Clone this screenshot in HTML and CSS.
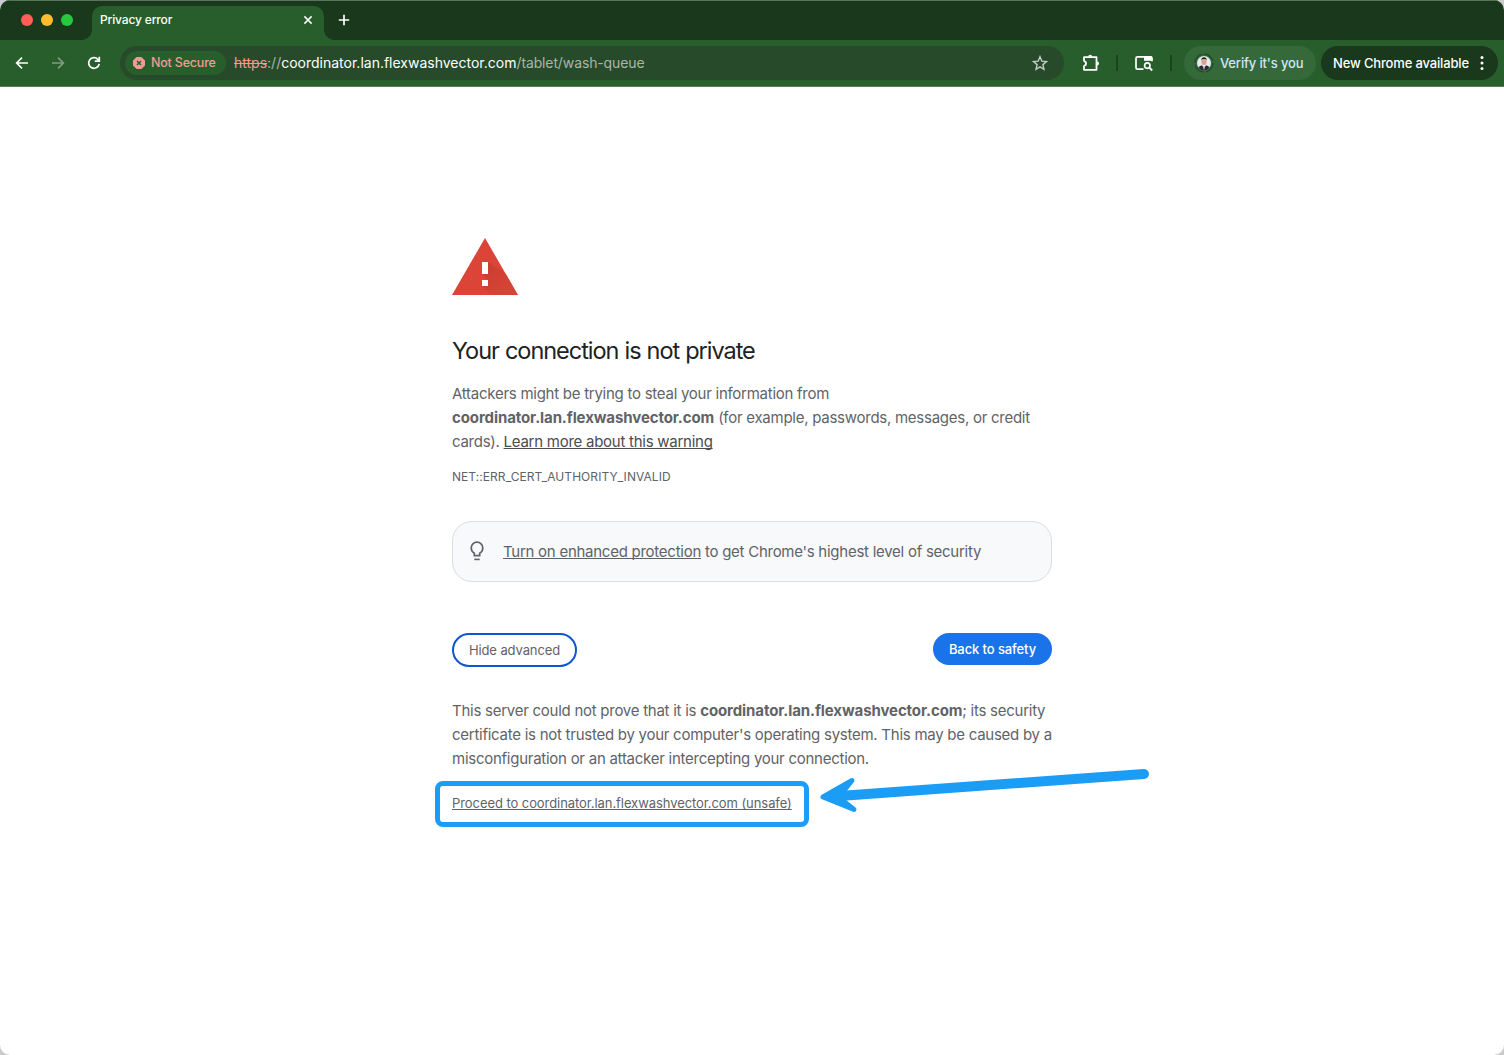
FILE: index.html
```html
<!DOCTYPE html>
<html lang="en">
<head>
    <meta charset="UTF-8">
    <meta name="viewport" content="width=device-width, initial-scale=1.0">
    <title>Privacy error</title>
    <link rel="stylesheet" href="styles.css">
</head>
<body>
    <div class="window">
        <header class="tab-strip">
            <div class="traffic-lights">
                <span class="light red"></span>
                <span class="light yellow"></span>
                <span class="light green"></span>
            </div>
            <div class="tab">
                <span class="tab-title">Privacy error</span>
                <svg class="tab-close" width="10" height="10" viewBox="0 0 10 10"><path d="M1.4 1.4l7.2 7.2M8.6 1.4L1.4 8.6" stroke="#fff" stroke-width="1.5"/></svg>
            </div>
            <svg class="new-tab" width="12" height="12" viewBox="0 0 12 12"><path d="M6 .8v10.4M.8 6h10.4" stroke="#fff" stroke-width="1.7"/></svg>
        </header>

        <nav class="toolbar">
            <div class="nav-buttons">
                <svg width="16" height="16" viewBox="0 0 16 16"><path d="M14 8H3M8 2.6L2.6 8 8 13.4" fill="none" stroke="#fff" stroke-width="1.6"/></svg>
                <svg class="disabled" width="16" height="16" viewBox="0 0 16 16"><path d="M2 8h11M8 2.6L13.4 8 8 13.4" fill="none" stroke="#fff" stroke-width="1.6"/></svg>
                <svg width="16" height="16" viewBox="0 0 16 16"><path d="M13.2 8.8A5.3 5.3 0 1 1 11.9 4.4L13 5.6" fill="none" stroke="#fff" stroke-width="1.7"/><path d="M13.3 1.8v4.4H8.8" fill="none" stroke="#fff" stroke-width="1.7"/></svg>
            </div>

            <div class="address-bar">
                <div class="not-secure">
                    <svg width="12" height="12" viewBox="0 0 12 12"><path d="M3.6 0h4.8L12 3.6v4.8L8.4 12H3.6L0 8.4V3.6z" fill="#f29b94"/><path d="M4 4l4 4M8 4L4 8" stroke="#285e2c" stroke-width="1.5"/></svg>
                    <span>Not Secure</span>
                </div>
                <div class="url"><span class="scheme">https</span><span class="dim">://</span><span class="host">coordinator.lan.flexwashvector.com</span><span class="path">/tablet/wash-queue</span></div>
                <svg class="star" width="16" height="16" viewBox="0 0 16 16"><path d="M8 1.7l1.8 4.4 4.7.4-3.6 3.1 1.1 4.7L8 11.8l-4 2.5 1.1-4.7L1.5 6.5l4.7-.4z" fill="none" stroke="#c3cdc4" stroke-width="1.4"/></svg>
            </div>

            <svg class="extensions" width="18" height="18" viewBox="0 0 18 18"><path d="M2 7.4V3.2h12.500v12.600H2v-4.200M2 7.400c2.700 0 2.700 4.200 0 4.200" fill="none" stroke="#fff" stroke-width="1.8" stroke-linejoin="round"/><path d="M6.200 2.800a2 2 0 0 1 4 0zM15 7.500a2 2 0 0 1 0 4z" fill="#fff"/></svg>
            <span class="divider"></span>
            <svg class="side-search" width="20" height="18" viewBox="0 0 20 18"><path d="M9.500 15.200H3.500a1.500 1.500 0 0 1-1.500-1.500V4.300a1.500 1.500 0 0 1 1.500-1.500h13a1.500 1.500 0 0 1 1.500 1.500v3" fill="none" stroke="#fff" stroke-width="1.700"/><path d="M10 2.500h8v4.300h-8z" fill="#fff"/><circle cx="13.300" cy="11.600" r="2.700" fill="none" stroke="#fff" stroke-width="1.700"/><path d="M15.300 13.600l2.900 2.900" stroke="#fff" stroke-width="1.800"/></svg>
            <span class="divider"></span>

            <div class="profile">
                <svg width="20" height="20" viewBox="0 0 20 20">
                    <circle cx="10" cy="10" r="9" fill="none" stroke="#1f5126" stroke-width="1.500" stroke-dasharray="12 2.100"/>
                    <circle cx="10" cy="10" r="7" fill="#e9eaf0"/>
                    <path d="M4.500 14.400c1-1.700 2.800-2.200 5.500-2.200s4.500.5 5.500 2.200A7 7 0 0 1 4.500 14.400z" fill="#25283c"/>
                    <path d="M8 11.500h4L10 17z" fill="#fff"/>
                    <path d="M9.600 13h.8l.2 3.500h-1.200z" fill="#a4483f"/>
                    <ellipse cx="10" cy="8.700" rx="2.600" ry="3.400" fill="#d9a48c"/>
                    <path d="M7.200 7.600c-.3-4.600 5.900-4.600 5.600 0l-1-1.500H8.200z" fill="#201a1a"/>
                </svg>
                <span>Verify it's you</span>
            </div>

            <div class="update">
                <span>New Chrome available</span>
                <svg width="4" height="16" viewBox="0 0 4 16"><circle cx="2" cy="2.500" r="1.500" fill="#fff"/><circle cx="2" cy="8" r="1.500" fill="#fff"/><circle cx="2" cy="13.500" r="1.500" fill="#fff"/></svg>
            </div>
        </nav>

        <main class="interstitial">
            <svg class="warning-icon" width="66" height="57" viewBox="0 0 66 57">
                <defs>
                    <linearGradient id="shade" gradientUnits="userSpaceOnUse" x1="33" y1="30" x2="52" y2="50">
                        <stop offset="0" stop-color="#b5382b"/>
                        <stop offset="1" stop-color="#d04335"/>
                    </linearGradient>
                </defs>
                <path d="M33 0l33 57H0z" fill="#db4437"/>
                <path d="M36 24l18 12L66 57H39l-9-9 6-6-6-6z" fill="url(#shade)" opacity=".5"/>
                <path d="M30 24h6v12h-6zM30 42h6v6h-6z" fill="#fff"/>
            </svg>

            <h1>Your connection is not private</h1>

            <p class="message">
                <span class="line">Attackers might be trying to steal your information from</span>
                <span class="line"><strong>coordinator.lan.flexwashvector.com</strong> (for example, passwords, messages, or credit</span>
                <span class="line">cards). <a href="#">Learn more about this warning</a></span>
            </p>

            <div class="error-code">NET::ERR_CERT_AUTHORITY_INVALID</div>

            <div class="enhanced">
                <svg width="14" height="20" viewBox="0 0 14 20"><path d="M4.300 14.700v-2.500C2.300 11 1.200 9.300 1.200 7a5.800 5.800 0 0 1 11.600 0c0 2.300-1.100 4-3.100 5.200v2.500z" fill="none" stroke="#5f6368" stroke-width="1.700"/><path d="M4.300 18.400h5.400" stroke="#5f6368" stroke-width="1.600"/></svg>
                <p><a href="#">Turn on enhanced protection</a> to get Chrome's highest level of security</p>
            </div>

            <div class="buttons">
                <button class="hide-advanced">Hide advanced</button>
                <button class="back">Back to safety</button>
            </div>

            <p class="details">
                <span class="line">This server could not prove that it is <strong>coordinator.lan.flexwashvector.com</strong>; its security</span>
                <span class="line">certificate is not trusted by your computer's operating system. This may be caused by a</span>
                <span class="line">misconfiguration or an attacker intercepting your connection.</span>
            </p>

            <div class="proceed">
                <a href="#">Proceed to coordinator.lan.flexwashvector.com (unsafe)</a>
                <div class="highlight"></div>
                <svg class="arrow" width="340" height="50" viewBox="0 0 340 50"><path d="M28 31.700L329 10" stroke="#1b9df5" stroke-width="10" stroke-linecap="round"/><path d="M8 33L37 16.500L27 29V36L39 45.500z" fill="#1b9df5" stroke="#1b9df5" stroke-width="5" stroke-linejoin="round"/></svg>
            </div>
        </main>
    </div>
</body>
</html>
```

FILE: styles.css
```css
* {
    box-sizing: border-box;
}
body {
    margin: 0;
    background-color: #c9cbcd;
    font-family: Inter, Roboto, sans-serif;
    font-size: 15px;
    color: #5f6368;
}
svg {
    display: block;
    flex: none;
}
.window {
    height: 1055px;
    background-color: #fff;
    border-radius: 10px;
    overflow: hidden;
}

/* Tab strip */
.tab-strip {
    display: flex;
    height: 40px;
    background-color: #1a381b;
    border-top: 1px solid #587359;
}
.traffic-lights {
    display: flex;
    gap: 8px;
    width: 92px;
    padding: 13px 0 0 21px;
}
.light {
    width: 12px;
    height: 12px;
    border-radius: 50%;
}
.red {
    background-color: #ff5f57;
}
.yellow {
    background-color: #febc2e;
}
.green {
    background-color: #28c840;
}
.tab {
    position: relative;
    display: flex;
    align-items: center;
    justify-content: space-between;
    width: 232px;
    height: 34px;
    margin-top: 5px;
    padding: 0 11px 7px 8px;
    background-color: #285e2c;
    border-radius: 10px 10px 0 0;
}
/* flared feet of the active tab */
.tab::before,
.tab::after {
    content: "";
    position: absolute;
    bottom: 0;
    width: 10px;
    height: 10px;
}
.tab::before {
    left: -10px;
    background: radial-gradient(circle at 0 0, transparent 9.5px, #285e2c 10px);
}
.tab::after {
    right: -10px;
    background: radial-gradient(circle at 100% 0, transparent 9.5px, #285e2c 10px);
}
.tab-title {
    color: #fff;
    font-size: 12px;
    font-weight: 500;
    letter-spacing: -0.15px;
}
.tab-close {
    margin-top: 1px;
}
.new-tab {
    margin: 13px 0 0 14px;
}

/* Toolbar */
.toolbar {
    display: flex;
    align-items: center;
    height: 47px;
    background-color: #285e2c;
    border-bottom: 1px solid #53805a;
    font-size: 13px;
    font-weight: 500;
    letter-spacing: -0.15px;
    white-space: nowrap;
}
.nav-buttons {
    display: flex;
    gap: 20px;
    width: 120px;
    padding-left: 14px;
}
.disabled {
    opacity: 0.4;
}
.address-bar {
    display: flex;
    align-items: center;
    width: 944px;
    height: 34px;
    padding: 0 16px 0 5px;
    background-color: #264a2a;
    border-radius: 17px;
}
.not-secure {
    display: flex;
    align-items: center;
    gap: 6px;
    width: 101px;
    height: 24px;
    padding-left: 8px;
    background-color: #285e2c;
    border-radius: 12px;
    color: #f29b94;
    font-size: 12.5px;
    letter-spacing: -0.2px;
}
.not-secure span {
    padding-bottom: 1px;
}
.url {
    flex: 1;
    margin-left: 8px;
    padding-bottom: 2px;
    font-size: 14px;
    font-weight: 400;
    letter-spacing: 0;
}
.scheme {
    color: #f29b94;
    text-decoration: line-through;
}
.dim,
.path {
    color: #a8b7a9;
}
.path {
    letter-spacing: -0.12px;
}
.host {
    color: #fff;
}
.extensions {
    margin-left: 18px;
}
.divider {
    width: 2px;
    height: 16px;
    margin-left: 16px;
    background-color: #1a4420;
}
.side-search {
    margin-left: 16px;
}
.profile {
    display: flex;
    align-items: center;
    gap: 6px;
    width: 132px;
    height: 34px;
    margin-left: 12px;
    padding-left: 10px;
    background-color: #35693a;
    border-radius: 17px;
    color: #d0e4ff;
}
.update {
    display: flex;
    align-items: center;
    justify-content: space-between;
    width: 177px;
    height: 34px;
    margin-left: 5px;
    padding: 0 14px 0 12px;
    background-color: #1a381b;
    border-radius: 17px;
    color: #fff;
}

/* Warning page */
.interstitial {
    width: 600px;
    margin: 0 auto;
    padding-top: 151px;
    line-height: 24px;
    letter-spacing: -0.26px;
}
.interstitial a {
    color: inherit;
    text-decoration: underline;
    text-underline-offset: 1px;
    text-decoration-thickness: 1px;
    text-decoration-skip-ink: none;
}
h1 {
    margin: 41px 0 0;
    color: #202124;
    font-size: 23.5px;
    font-weight: 400;
    line-height: 29px;
    letter-spacing: -1.03px;
    word-spacing: 0.5px;
}
p {
    margin: 0;
}
strong {
    letter-spacing: -0.1px;
}
.line {
    display: block;
    white-space: nowrap;
}
.message {
    margin-top: 17px;
}
.message a {
    color: #4b4c4f;
}
.error-code {
    margin-top: 12px;
    font-size: 12px;
    line-height: 22px;
    letter-spacing: 0.06px;
}
.enhanced {
    display: flex;
    align-items: center;
    gap: 19px;
    height: 61px;
    margin-top: 33px;
    padding-left: 17px;
    background-color: #f8f9fb;
    border: 1px solid #dadce0;
    border-radius: 20px;
    white-space: nowrap;
}
.enhanced svg {
    margin-bottom: 2px;
}
.buttons {
    display: flex;
    align-items: flex-start;
    justify-content: space-between;
    margin-top: 51px;
}
button {
    padding: 0;
    font-family: inherit;
    font-size: 13px;
    letter-spacing: -0.1px;
    white-space: nowrap;
}
.hide-advanced {
    width: 125px;
    height: 34px;
    background-color: #fff;
    border: 2px solid #0b57d0;
    border-radius: 17px;
    color: #5f6368;
}
.back {
    width: 119px;
    height: 32px;
    background-color: #1a73e8;
    border: none;
    border-radius: 16px;
    color: #fff;
    font-weight: 500;
}
.details {
    margin-top: 32px;
}
.proceed {
    position: relative;
    margin-top: 20px;
    font-size: 13px;
    letter-spacing: -0.07px;
    white-space: nowrap;
}
.highlight {
    position: absolute;
    left: -17px;
    top: -10px;
    width: 374px;
    height: 46px;
    border: 5px solid #1b9df5;
    border-radius: 8px;
}
.arrow {
    position: absolute;
    left: 363px;
    top: -27px;
}
```
